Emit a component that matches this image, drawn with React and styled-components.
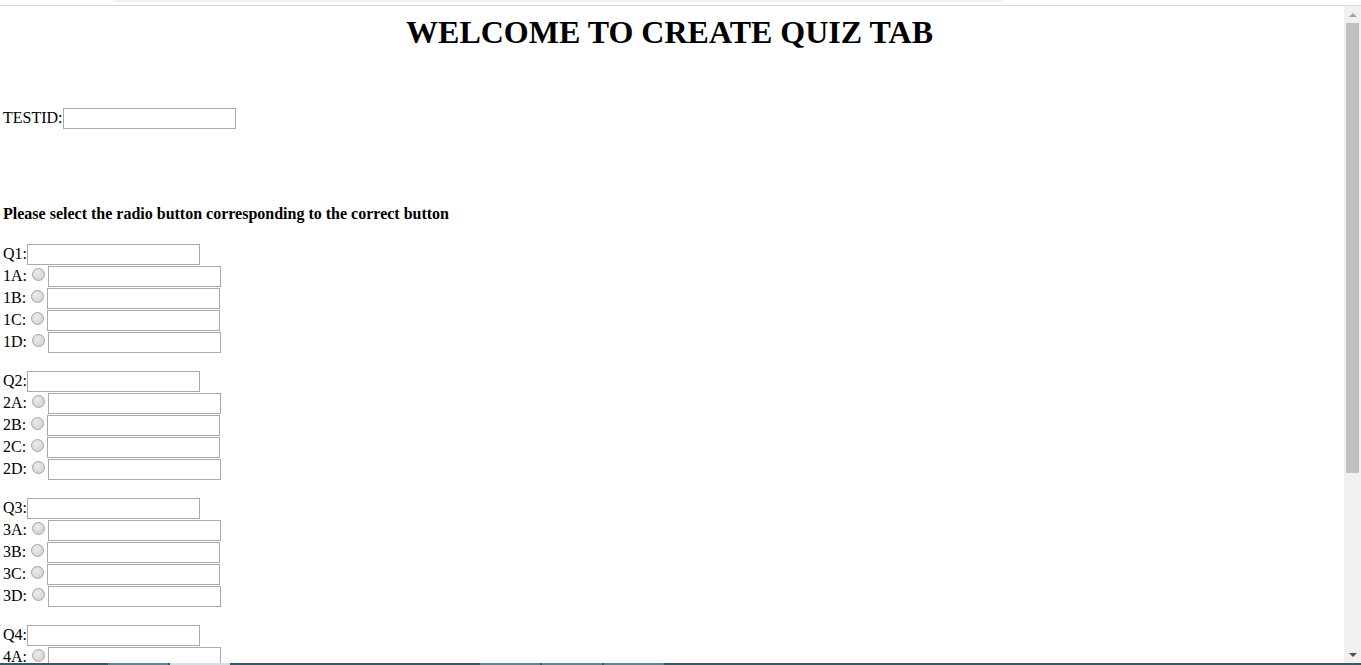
import React from "react";
import styled, { createGlobalStyle } from "styled-components";

const GlobalStyle = createGlobalStyle`
  html, body {
    margin: 0;
    padding: 0;
    background: #ffffff;
  }
  body {
    font-family: "Liberation Serif", "Times New Roman", serif;
    color: #000;
  }
`

const Frame = styled.div`
  width: 1361px;
  height: 665px;
  overflow: hidden;
  display: flex;
  flex-direction: column;
  background: #fff;
`

const TopStrip = styled.div`
  height: 5px;
  border-bottom: 1px solid #dadada;
  display: flex;
  padding-left: 113px;
`

const TopTab = styled.div`
  width: 890px;
  height: 2px;
  background: #f1f1f1;
  border-radius: 0 0 4px 4px;
`

const Viewport = styled.div`
  flex: 1;
  display: flex;
  min-height: 0;
`

const Page = styled.main`
  flex: 1;
  display: flex;
  flex-direction: column;
  padding: 8px 8px 0 3px;
  overflow: hidden;
`

const Title = styled.h1`
  margin: 0;
  font-size: 32px;
  line-height: 37px;
  font-weight: bold;
  text-align: center;
`

const Row = styled.div`
  display: flex;
  align-items: baseline;
  height: 22px;
  font-size: 16px;
  white-space: pre;
`

const QuestionRow = styled(Row)`
  height: 21px;
  padding-top: 1px;
`

const TestRow = styled(Row)`
  margin-top: 57px;
`

const Instruction = styled.h4`
  margin: 75px 0 0;
  font-size: 16px;
  line-height: 19px;
  font-weight: bold;
`

const Questions = styled.div`
  margin-top: 20px;
  display: flex;
  flex-direction: column;
  gap: 17px;
`

const Group = styled.div`
  display: flex;
  flex-direction: column;
`

const TextBox = styled.input.attrs({ type: "text" })`
  box-sizing: border-box;
  width: 173px;
  height: 21px;
  margin: 0;
  padding: 1px 2px;
  border: 1px solid #a9a9a9;
  font: 13.33px "Liberation Sans", Arial, sans-serif;
  background: #fff;
`

const Radio = styled.input.attrs({ type: "radio" })`
  appearance: none;
  box-sizing: border-box;
  width: 13px;
  height: 13px;
  margin: 3px 3px 0 5px;
  border-radius: 50%;
  border: 1px solid #a4a4a4;
  background: radial-gradient(circle at 40% 35%, #ececec 0%, #d9d9d9 60%, #cfcfcf 100%);
`

const Scrollbar = styled.div`
  width: 17px;
  background: #f0f0f0;
  display: flex;
  flex-direction: column;
  align-items: center;
`

const Arrow = styled.div`
  width: 0;
  height: 0;
  border-left: 4px solid transparent;
  border-right: 4px solid transparent;
  ${(p) => (p.$down ? "border-top: 4px solid #505050;" : "border-bottom: 4px solid #a3a3a3;")}
  margin: ${(p) => (p.$down ? "auto 0 6px" : "7px 0 0")};
`

const Thumb = styled.div`
  width: 13px;
  height: 450px;
  margin-top: 6px;
  background: #c1c1c1;
`

const Taskbar = styled.div`
  height: 2px;
  background: #2c5e69;
  display: flex;
  padding-left: 108px;
`

const TaskTab = styled.div`
  width: 60px;
  margin-right: 2px;
  margin-left: ${(p) => p.$gap || 0}px;
  background: ${(p) => (p.$light ? "#d4dfe2" : "#5d8791")};
`

const letters = ["A", "B", "C", "D"];

const App = () => {
  return (
    <>
      <GlobalStyle />
      <Frame>
        <TopStrip>
          <TopTab />
        </TopStrip>
        <Viewport>
          <Page>
            <Title>WELCOME TO CREATE QUIZ TAB</Title>
            <TestRow>
              TESTID:<TextBox />
            </TestRow>
            <Instruction>Please select the radio button corresponding to the correct button</Instruction>
            <Questions>
              {[1, 2, 3, 4].map((n) => (
                <Group key={n}>
                  <QuestionRow>
                    Q{n}:<TextBox />
                  </QuestionRow>
                  {letters.map((l) => (
                    <Row key={l}>
                      {n}
                      {l}:<Radio name={"q" + n} />
                      <TextBox />
                    </Row>
                  ))}
                </Group>
              ))}
            </Questions>
          </Page>
          <Scrollbar>
            <Arrow />
            <Thumb />
            <Arrow $down />
          </Scrollbar>
        </Viewport>
        <Taskbar>
          <TaskTab />
          <TaskTab $light />
          <TaskTab $gap={248} />
          <TaskTab />
          <TaskTab />
        </Taskbar>
      </Frame>
    </>
  );
};

export default App;
